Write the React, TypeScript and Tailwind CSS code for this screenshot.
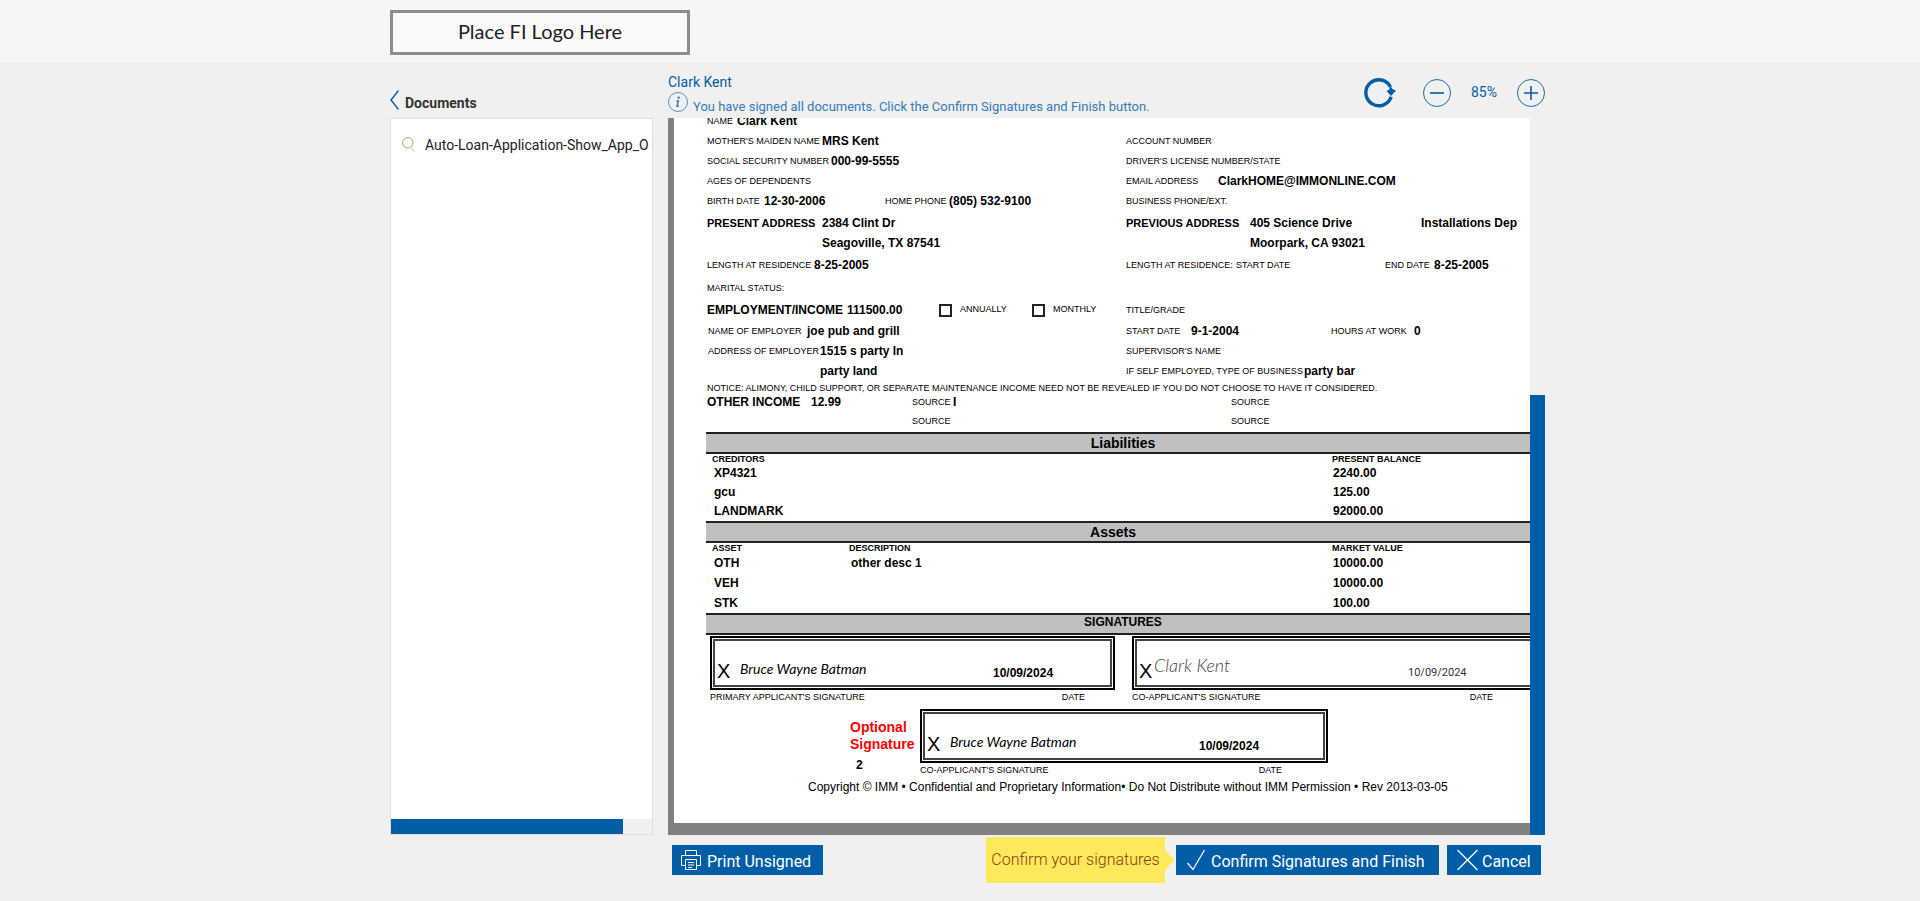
import { useState } from 'react';
import type { ReactNode } from 'react';
import clsx from 'clsx';

const icon = { fill: 'none', stroke: 'currentColor' } as const;

function Row({ children, className }: { children?: ReactNode; className?: string }) {
  return <div className={clsx('flex h-3.5 items-center whitespace-nowrap', className)}>{children}</div>;
}

function Label({ children, className }: { children?: ReactNode; className?: string }) {
  return <span className={clsx('shrink-0 text-[9px] leading-3.5', className)}>{children}</span>;
}

function Bold({ children, className, small }: { children?: ReactNode; className?: string; small?: boolean }) {
  return <span className={clsx('shrink-0 leading-3.5 font-bold', small ? 'text-[11px]' : 'text-xs', className)}>{children}</span>;
}

function Check({ label, className }: { label: string; className?: string }) {
  return (
    <label className={clsx('flex shrink-0 items-center gap-2 text-[9px]', className)}>
      <input type="checkbox" className="size-[13px] appearance-none border-2 border-[#222] bg-white checked:bg-[#222]" />
      {label}
    </label>
  );
}

function Bar({ title, className }: { title: string; className?: string }) {
  return (
    <h2 className={clsx('flex h-[22px] items-center justify-center border-y-2 border-[#222] bg-[#c0c0c0] font-bold', className)}>
      {title}
    </h2>
  );
}

interface SignatureBoxProps {
  name: string;
  label: string;
  dateClass: string;
  footClass: string;
  plain?: boolean;
  className?: string;
}

function SignatureBox({ name, label, dateClass, footClass, plain, className }: SignatureBoxProps) {
  return (
    <div className={clsx('shrink-0', className)}>
      <div className="border-2 border-black p-px">
        <div className="flex h-12 items-end border-2 border-[#444] pr-1 pb-1 pl-0.5">
          <span className="w-[15px] text-xl leading-5">X</span>
          <span className={clsx('flex-1 font-[Lato] italic', plain ? 'text-lg leading-8 font-light text-[#444]' : 'pl-2 text-sm leading-6')}>{name}</span>
          <span className={clsx('leading-4', dateClass, plain ? 'font-[Roboto] text-[11px] text-[#333]' : 'text-xs font-bold')}>10/09/2024</span>
        </div>
      </div>
      <div className={clsx('flex justify-between text-[9px] leading-3.5', footClass)}>
        <span>{label}</span>
        <span>DATE</span>
      </div>
    </div>
  );
}

function LoanApplication() {
  return (
    <article className="w-[898px] shrink-0 bg-white px-8 font-['Liberation_Sans',sans-serif] text-black">
      <div className="pl-px">
        <Row className="-mt-1">
          <Label className="w-[30px]">NAME</Label>
          <Bold>Clark Kent</Bold>
        </Row>
        <Row className="mt-1.5">
          <div className="flex w-[419px]">
            <Label className="w-[115px]">MOTHER'S MAIDEN NAME</Label>
            <Bold>MRS Kent</Bold>
          </div>
          <Label>ACCOUNT NUMBER</Label>
        </Row>
        <Row className="mt-1.5">
          <div className="flex w-[419px]">
            <Label className="w-[124px]">SOCIAL SECURITY NUMBER</Label>
            <Bold>000-99-5555</Bold>
          </div>
          <Label>DRIVER'S LICENSE NUMBER/STATE</Label>
        </Row>
        <Row className="mt-1.5">
          <Label className="w-[419px]">AGES OF DEPENDENTS</Label>
          <Label className="w-[92px]">EMAIL ADDRESS</Label>
          <Bold>ClarkHOME@IMMONLINE.COM</Bold>
        </Row>
        <Row className="mt-1.5">
          <div className="flex w-[419px]">
            <Label className="w-[57px]">BIRTH DATE</Label>
            <Bold className="w-[121px]">12-30-2006</Bold>
            <Label className="w-16">HOME PHONE</Label>
            <Bold>(805) 532-9100</Bold>
          </div>
          <Label>BUSINESS PHONE/EXT.</Label>
        </Row>
        <Row className="mt-2">
          <div className="flex w-[419px]">
            <Bold small className="w-[115px]">PRESENT ADDRESS</Bold>
            <Bold>2384 Clint Dr</Bold>
          </div>
          <Bold small className="w-[124px]">PREVIOUS ADDRESS</Bold>
          <Bold className="w-[171px]">405 Science Drive</Bold>
          <Bold>Installations Dep</Bold>
        </Row>
        <Row className="mt-1.5">
          <Bold className="w-[428px] pl-[115px]">Seagoville, TX 87541</Bold>
          <Bold className="pl-[115px]">Moorpark, CA 93021</Bold>
        </Row>
        <Row className="mt-2">
          <div className="flex w-[419px]">
            <Label className="w-[107px]">LENGTH AT RESIDENCE</Label>
            <Bold>8-25-2005</Bold>
          </div>
          <Label className="w-[110px]">LENGTH AT RESIDENCE:</Label>
          <Label className="w-[149px]">START DATE</Label>
          <Label className="w-[49px]">END DATE</Label>
          <Bold>8-25-2005</Bold>
        </Row>
        <Row className="mt-[9px]">
          <Label>MARITAL STATUS:</Label>
        </Row>
        <Row className="mt-2">
          <div className="flex w-[419px]">
            <Bold className="w-[140px]">EMPLOYMENT/INCOME</Bold>
            <Bold className="w-[92px]">111500.00</Bold>
            <Check label="ANNUALLY" className="w-[93px]" />
            <Check label="MONTHLY" />
          </div>
          <Label>TITLE/GRADE</Label>
        </Row>
        <Row className="mt-[7px]">
          <div className="flex w-[419px] pl-px">
            <Label className="w-[99px]">NAME OF EMPLOYER</Label>
            <Bold>joe pub and grill</Bold>
          </div>
          <Label className="w-[65px]">START DATE</Label>
          <Bold className="w-[140px]">9-1-2004</Bold>
          <Label className="w-[83px]">HOURS AT WORK</Label>
          <Bold>0</Bold>
        </Row>
        <Row className="mt-1.5">
          <div className="flex w-[419px] pl-px">
            <Label className="w-[112px]">ADDRESS OF EMPLOYER</Label>
            <Bold>1515 s party ln</Bold>
          </div>
          <Label>SUPERVISOR'S NAME</Label>
        </Row>
        <Row className="mt-1.5">
          <Bold className="w-[419px] pl-[113px]">party land</Bold>
          <Label className="mr-px min-w-[169px]">IF SELF EMPLOYED, TYPE OF BUSINESS</Label>
          <Bold>party bar</Bold>
        </Row>
        <Row className="mt-[3px]">
          <Label>NOTICE: ALIMONY, CHILD SUPPORT, OR SEPARATE MAINTENANCE INCOME NEED NOT BE REVEALED IF YOU DO NOT CHOOSE TO HAVE IT CONSIDERED.</Label>
        </Row>
        <Row>
          <Bold className="w-[104px]">OTHER INCOME</Bold>
          <Bold className="w-[101px]">12.99</Bold>
          <Label className="w-[41px]">SOURCE</Label>
          <Bold className="w-[278px]">I</Bold>
          <Label>SOURCE</Label>
        </Row>
        <Row className="mt-[5px] pl-[205px]">
          <Label className="w-[319px]">SOURCE</Label>
          <Label>SOURCE</Label>
        </Row>
      </div>

      <Bar title="Liabilities" className="mt-1 text-sm" />
      <table className="w-full table-fixed text-left text-xs font-bold">
        <thead>
          <tr className="text-[9px] leading-2.5">
            <th className="w-[620px] pl-1.5">CREDITORS</th>
            <th className="pl-1.5">PRESENT BALANCE</th>
          </tr>
        </thead>
        <tbody className="leading-[19px]">
          {[['XP4321', '2240.00'], ['gcu', '125.00'], ['LANDMARK', '92000.00']].map(([creditor, balance]) => (
            <tr key={creditor}>
              <td className="pl-2">{creditor}</td>
              <td className="pl-[7px]">{balance}</td>
            </tr>
          ))}
        </tbody>
      </table>

      <Bar title="Assets" className="pr-5 text-sm" />
      <table className="w-full table-fixed text-left text-xs font-bold">
        <thead>
          <tr className="text-[9px] leading-2.5">
            <th className="w-[137px] pl-1.5">ASSET</th>
            <th className="w-[483px] pl-1.5">DESCRIPTION</th>
            <th className="pl-1.5">MARKET VALUE</th>
          </tr>
        </thead>
        <tbody className="leading-5">
          {[['OTH', 'other desc 1', '10000.00'], ['VEH', '', '10000.00'], ['STK', '', '100.00']].map(([asset, description, value]) => (
            <tr key={asset}>
              <td className="pl-2">{asset}</td>
              <td className="pl-2">{description}</td>
              <td className="pl-[7px]">{value}</td>
            </tr>
          ))}
        </tbody>
      </table>

      <Bar title="SIGNATURES" className="pb-1 text-xs" />
      <div className="mt-px flex gap-[17px] pl-1">
        <SignatureBox name="Bruce Wayne Batman" label="PRIMARY APPLICANT'S SIGNATURE" dateClass="w-[113px]" footClass="pr-[30px]" className="w-[405px]" />
        <SignatureBox name="Clark Kent" label="CO-APPLICANT'S SIGNATURE" dateClass="w-[120px]" footClass="pr-11" plain className="w-[405px]" />
      </div>
      <div className="mt-[5px] flex pl-36">
        <div className="w-[70px] pt-2.5">
          <p className="text-sm leading-[17px] font-bold text-[#f00]">Optional Signature</p>
          <p className="pt-1 pl-1.5 text-xs font-bold">2</p>
        </div>
        <SignatureBox name="Bruce Wayne Batman" label="CO-APPLICANT'S SIGNATURE" dateClass="w-[120px]" footClass="pr-[46px]" className="w-[408px]" />
      </div>
      <p className="pb-[26px] pl-[102px] text-xs leading-5">
        Copyright © IMM • Confidential and Proprietary Information• Do Not Distribute without IMM Permission • Rev 2013-03-05
      </p>
    </article>
  );
}

export default function App() {
  const [zoom, setZoom] = useState(85);

  return (
    <div className="min-h-screen bg-[#f0f0f0] font-[Roboto,sans-serif]">
      <header className="bg-[#f5f5f5]">
        <div className="mx-auto flex h-[62px] max-w-[1170px] items-start pt-2.5 pl-[15px]">
          <div className="flex h-[45px] w-[300px] items-center justify-center border-3 border-[#8c8c8c] bg-[#fafafa] pb-1 font-[Lato] text-xl text-[#222]">
            Place FI Logo Here
          </div>
        </div>
      </header>

      <div className="mx-auto max-w-[1170px] pl-[15px]">
        <main className="flex gap-[15px]">
          <aside className="flex w-[263px] shrink-0 flex-col">
            <button className="flex h-14 items-end gap-1.5 pb-2 text-left">
              <svg viewBox="0 0 9 20" className="h-5 w-[9px] text-[#005da6]" {...icon} strokeWidth="1.4"><path d="M8.5.5 1 10l7.5 9.5" /></svg>
              <span className="text-sm leading-3.5 font-bold text-[#333]">Documents</span>
            </button>
            <div className="flex flex-1 flex-col border border-[#ddd] bg-white">
              <a href="#document" className="flex items-center gap-2.5 overflow-hidden pt-4 pl-[11px] text-sm leading-5 text-[#222]">
                <svg viewBox="0 0 13 16" className="h-4 w-[13px] shrink-0" {...icon}>
                  <circle cx="5.8" cy="5.8" r="5.2" stroke="#8fae5d" />
                  <path d="m8.8 10.2 3.7 5" stroke="#c9c3ad" />
                </svg>
                <span className="whitespace-nowrap">Auto-Loan-Application-Show_App_O</span>
              </a>
              <div className="mt-auto h-[15px] bg-[#f0f0f0]">
                <div className="h-full w-[89%] bg-[#005da6]" />
              </div>
            </div>
          </aside>

          <section className="min-w-0 flex-1">
            <div className="flex h-14 items-start justify-between">
              <div className="pt-3">
                <h1 className="text-sm leading-4 text-[#005da6]">Clark Kent</h1>
                <p className="flex items-start gap-[5px] pt-0.5 text-[13px] leading-5 text-[#337ab7]">
                  <svg viewBox="0 0 20 20" className="size-5" {...icon}>
                    <circle cx="10" cy="10" r="9.5" strokeWidth=".8" />
                    <circle cx="10.7" cy="5.6" r="1.2" fill="currentColor" stroke="none" />
                    <path d="M8.3 9h2l-1.2 5.2h1.8" strokeWidth="1.5" />
                  </svg>
                  <span className="pt-[5px]">You have signed all documents. Click the Confirm Signatures and Finish button.</span>
                </p>
              </div>
              <div className="flex items-center pt-4 text-[#005da6]">
                <button aria-label="Rotate" className="mr-[27px]">
                  <svg viewBox="0 0 32 30" className="h-[30px] w-8" {...icon}>
                    <path d="M27.2 18.8A13 13 0 1 1 26.5 9" strokeWidth="3.4" />
                    <path d="m22.5 13 2.5-1.2 1.5-3.800 2.200 3.200 3.300 1.300-5 5.500z" fill="currentColor" stroke="none" />
                  </svg>
                </button>
                <button aria-label="Zoom out" onClick={() => setZoom(z => z - 5)}>
                  <svg viewBox="0 0 28 28" className="size-7" {...icon}><circle cx="14" cy="14" r="13.5" strokeWidth=".9" /><path d="M7 14h14" strokeWidth="1.6" /></svg>
                </button>
                <span className="w-[66px] pb-0.5 text-center text-sm">{zoom}%</span>
                <button aria-label="Zoom in" onClick={() => setZoom(z => z + 5)}>
                  <svg viewBox="0 0 28 28" className="size-7" {...icon}><circle cx="14" cy="14" r="13.5" strokeWidth=".9" /><path d="M7 14h14M14 7v14" strokeWidth="1.6" /></svg>
                </button>
              </div>
            </div>
            <div className="flex">
              <div className="flex min-w-0 flex-1 overflow-hidden bg-[#808080] pb-3 pl-1.5">
                <LoanApplication />
              </div>
              <div className="flex w-[15px] shrink-0 flex-col justify-end">
                <div className="h-[440px] bg-[#005da6]" />
              </div>
            </div>
          </section>
        </main>

        <footer className="flex items-center pt-0.5 pr-1 pl-[282px] text-base text-white">
          <button className="flex h-[30px] w-[151px] items-center gap-[5px] bg-[#005da6] pl-2">
            <svg viewBox="0 0 22 22" className="size-[22px]" {...icon}>
              <path d="M5.5 6.5v-5h11v5M5.5 16.5h-4v-10h19v10h-4M5.5 10.5h11v10h-11zM8 13.5h6M8 16h6M8 18.5h4" />
            </svg>
            <span className="pt-1">Print Unsigned</span>
          </button>
          <div className="ml-auto flex items-center">
            <div className="flex h-[46px] w-[179px] items-center justify-center bg-[#ffe95a] font-light text-[#8a3b12]">Confirm your signatures</div>
            <svg viewBox="0 0 10 20" className="mr-px h-5 w-2.5"><path d="M0 0l9.5 10L0 20z" fill="#ffe95a" /></svg>
          </div>
          <button className="flex h-[30px] w-[263px] items-center gap-[5px] bg-[#005da6] pl-2.5">
            <svg viewBox="0 0 20 22" className="h-[22px] w-5" {...icon} strokeWidth="1.2"><path d="m1.5 14 5.5 6.5L18.5 1" /></svg>
            <span className="pt-1">Confirm Signatures and Finish</span>
          </button>
          <button className="ml-2 flex h-[30px] w-[94px] items-center gap-1 bg-[#005da6] pl-2.5">
            <svg viewBox="0 0 21 22" className="h-[22px] w-[21px]" {...icon} strokeWidth="1.2"><path d="m.5 1 20 20M20.5 1l-20 20" /></svg>
            <span className="pt-1">Cancel</span>
          </button>
        </footer>
      </div>
    </div>
  );
}
